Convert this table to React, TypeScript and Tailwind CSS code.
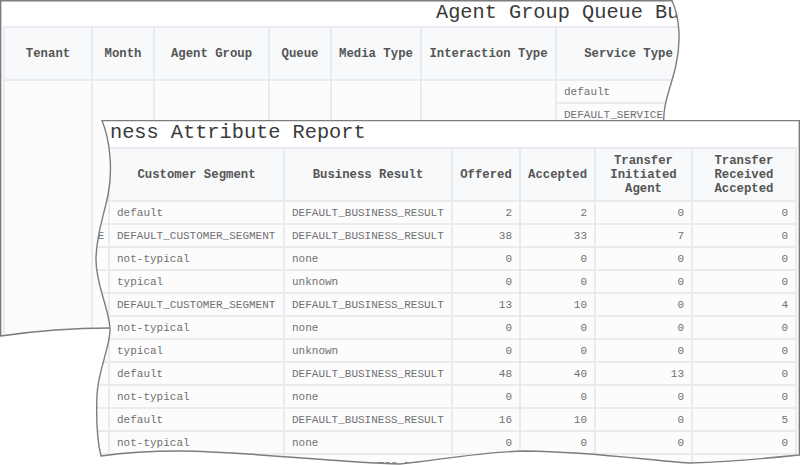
import React from "react";

type Row = [string, string, string, string, string, string, string];

const frontRows: Row[] = [
  ["default", "default", "DEFAULT_BUSINESS_RESULT", "2", "2", "0", "0"],
  ["DEFAULT_SERVICE_TYPE", "DEFAULT_CUSTOMER_SEGMENT", "DEFAULT_BUSINESS_RESULT", "38", "33", "7", "0"],
  ["default", "not-typical", "none", "0", "0", "0", "0"],
  ["default", "typical", "unknown", "0", "0", "0", "0"],
  ["default", "DEFAULT_CUSTOMER_SEGMENT", "DEFAULT_BUSINESS_RESULT", "13", "10", "0", "4"],
  ["default", "not-typical", "none", "0", "0", "0", "0"],
  ["default", "typical", "unknown", "0", "0", "0", "0"],
  ["default", "default", "DEFAULT_BUSINESS_RESULT", "48", "40", "13", "0"],
  ["default", "not-typical", "none", "0", "0", "0", "0"],
  ["default", "default", "DEFAULT_BUSINESS_RESULT", "16", "10", "0", "5"],
  ["default", "not-typical", "none", "0", "0", "0", "0"],
  ["default", "default", "DEFAULT_BUSINESS_RESULT", "7", "5", "0", "0"],
];

const backService = ["default", "DEFAULT_SERVICE_TYPE", "", "", "", "", "", "", "", "", "", "", ""];

function Th({ children }: { children?: React.ReactNode }) {
  return (
    <th className="border-2 border-[#e8ebef] bg-[#f8f9fa] h-[53px] px-[7px] text-[12.3px] leading-[14px] font-bold text-[#555] text-center align-middle">
      {children}
    </th>
  );
}

function Td({ children, num }: { children?: React.ReactNode; num?: boolean }) {
  return (
    <td
      className={
        num
          ? "border-2 border-[#e8ebef] bg-[#fcfcfc] h-[23px] px-[7px] text-[11px] leading-[14px] text-[#707070] whitespace-nowrap overflow-hidden text-right align-middle"
          : "border-2 border-[#e8ebef] bg-[#fcfcfc] h-[23px] px-[7px] text-[11px] leading-[14px] text-[#707070] whitespace-nowrap overflow-hidden text-left align-middle"
      }
    >
      {children}
    </td>
  );
}

export default function App() {
  return (
    <div className="relative w-[800px] h-[465px] overflow-hidden bg-white font-['Liberation_Mono','Courier_New',monospace]">
      <svg width="0" height="0" className="absolute">
        <defs>
          <clipPath id="backClip" clipPathUnits="userSpaceOnUse">
            <path d="M0 0 H672 C680 18 681 42 676 65 C671 88 662 105 664 125 L664 328 L110 328 C70 328 35 331 0 336 Z" />
          </clipPath>
          <clipPath id="frontClip" clipPathUnits="userSpaceOnUse">
            <path d="M102 0 C110 20 113 50 108 75 C104 95 96 115 96 140 C96 165 108 185 110 208 C111 225 98 250 97 275 C96 300 97 320 101 336 C115 334 140 331 180 331 C240 331 330 342 400 344 C440 340 480 332 525 331 C600 332 650 341 690 343 C720 342 770 338 800 335 L800 0 Z" />
          </clipPath>
        </defs>
      </svg>

      {/* back paper */}
      <div className="absolute left-0 top-0 w-[700px] h-[340px] bg-white [clip-path:url(#backClip)]">
        <div className="h-[26px] pl-[436px] text-[20.3px] leading-[26px] text-[#3a3a3a] whitespace-nowrap">
          Agent Group Queue Business Attribute Report
        </div>
        <table className="ml-[3px] w-[697px] table-fixed border-collapse">
          <colgroup>
            <col className="w-[88px]" />
            <col className="w-[62px]" />
            <col className="w-[115px]" />
            <col className="w-[62px]" />
            <col className="w-[90px]" />
            <col className="w-[135px]" />
            <col className="w-[145px]" />
          </colgroup>
          <thead>
            <tr>
              <Th>Tenant</Th>
              <Th>Month</Th>
              <Th>Agent Group</Th>
              <Th>Queue</Th>
              <Th>Media Type</Th>
              <Th>Interaction Type</Th>
              <Th>Service Type</Th>
            </tr>
          </thead>
          <tbody>
            {backService.map((s, i) => (
              <tr key={i}>
                {i === 0 && (
                  <>
                    <td rowSpan={13} className="border-2 border-[#e8ebef] bg-[#fcfcfc]" />
                    <td rowSpan={13} className="border-2 border-[#e8ebef] bg-[#fcfcfc]" />
                    <td rowSpan={13} className="border-2 border-[#e8ebef] bg-[#fcfcfc]" />
                    <td rowSpan={13} className="border-2 border-[#e8ebef] bg-[#fcfcfc]" />
                    <td rowSpan={13} className="border-2 border-[#e8ebef] bg-[#fcfcfc]" />
                    <td rowSpan={13} className="border-2 border-[#e8ebef] bg-[#fcfcfc]" />
                  </>
                )}
                <Td>{s}</Td>
              </tr>
            ))}
          </tbody>
        </table>
      </div>
      <svg className="absolute left-0 top-0 pointer-events-none" width="800" height="465">
        <path
          d="M0.7 0.7 H672 C680 18 681 42 676 65 C671 88 662 105 664 125 L664 328 L110 328 C70 328 35 331 0.7 336 Z"
          fill="none"
          stroke="#7d7d7d"
          strokeWidth="1.4"
        />
      </svg>

      {/* front paper */}
      <div className="absolute left-0 top-[120px] w-[800px] h-[345px] bg-white [clip-path:url(#frontClip)]">
        <div className="h-[27px] pl-[110px] text-[20.3px] leading-[26px] text-[#3a3a3a] whitespace-nowrap">
          ness Attribute Report
        </div>
        <table className="ml-[-37px] w-[832px] table-fixed border-collapse">
          <colgroup>
            <col className="w-[145px]" />
            <col className="w-[175px]" />
            <col className="w-[168px]" />
            <col className="w-[68px]" />
            <col className="w-[75px]" />
            <col className="w-[97px]" />
            <col className="w-[104px]" />
          </colgroup>
          <thead>
            <tr>
              <Th></Th>
              <Th>Customer Segment</Th>
              <Th>Business Result</Th>
              <Th>Offered</Th>
              <Th>Accepted</Th>
              <Th>Transfer Initiated Agent</Th>
              <Th>Transfer Received Accepted</Th>
            </tr>
          </thead>
          <tbody>
            {frontRows.map((r, i) => (
              <tr key={i}>
                <Td>{i === 1 ? r[0] : ""}</Td>
                <Td>{r[1]}</Td>
                <Td>{r[2]}</Td>
                <Td num>{r[3]}</Td>
                <Td num>{r[4]}</Td>
                <Td num>{r[5]}</Td>
                <Td num>{r[6]}</Td>
              </tr>
            ))}
          </tbody>
        </table>
      </div>
      <svg className="absolute left-0 top-0 pointer-events-none" width="800" height="465">
        <path
          d="M102 120.6 C110 140 113 170 108 195 C104 215 96 235 96 260 C96 285 108 305 110 328 C111 345 98 370 97 395 C96 420 97 440 101 456 C115 454 140 451 180 451 C240 451 330 462 400 464 C440 460 480 452 525 451 C600 452 650 461 690 463 C720 462 770 458 799.3 455 L799.3 120.6 Z"
          fill="none"
          stroke="#7d7d7d"
          strokeWidth="1.4"
        />
      </svg>
    </div>
  );
}
